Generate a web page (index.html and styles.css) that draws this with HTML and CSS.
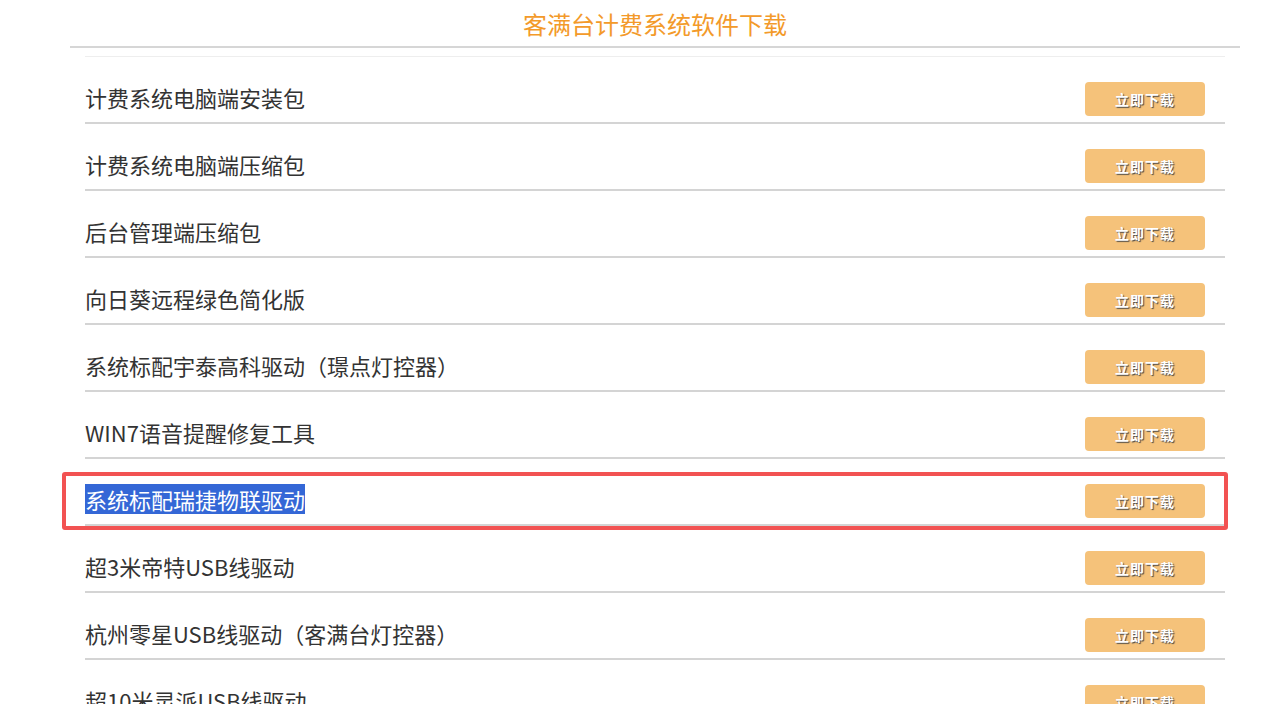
FILE: index.html
```html
<!DOCTYPE html>
<html lang="zh-CN">
<head>
<meta charset="utf-8">
<title>客满台计费系统软件下载</title>
<link rel="stylesheet" href="styles.css">
</head>
<body>
<div class="page">
  <h1 class="title">客满台计费系统软件下载</h1>
  <ul class="list">
    <li class="row"><span class="name">计费系统电脑端安装包</span><a class="btn">立即下载</a></li>
    <li class="row"><span class="name">计费系统电脑端压缩包</span><a class="btn">立即下载</a></li>
    <li class="row"><span class="name">后台管理端压缩包</span><a class="btn">立即下载</a></li>
    <li class="row"><span class="name">向日葵远程绿色简化版</span><a class="btn">立即下载</a></li>
    <li class="row"><span class="name">系统标配宇泰高科驱动（璟点灯控器）</span><a class="btn">立即下载</a></li>
    <li class="row"><span class="name">WIN7语音提醒修复工具</span><a class="btn">立即下载</a></li>
    <li class="row"><span class="name selected">系统标配瑞捷物联驱动</span><a class="btn">立即下载</a></li>
    <li class="row"><span class="name">超3米帝特USB线驱动</span><a class="btn">立即下载</a></li>
    <li class="row"><span class="name">杭州零星USB线驱动（客满台灯控器）</span><a class="btn">立即下载</a></li>
    <li class="row"><span class="name">超10米灵派USB线驱动</span><a class="btn">立即下载</a></li>
  </ul>
</div>
<div class="mark"></div>
</body>
</html>
```

FILE: styles.css
```css
html, body {
  margin: 0;
  padding: 0;
  background: #fff;
  overflow: hidden;
  height: 704px;
}
body {
  font-family: "Noto Sans CJK SC", "Noto Sans", sans-serif;
  color: #333;
}
.page {
  width: 1170px;
  margin-left: 70px;
}
.title {
  margin: 0;
  height: 46px;
  line-height: 48px;
  font-size: 24px;
  font-weight: normal;
  text-align: center;
  color: #f39a2a;
  border-bottom: 2px solid #d6d6d6;
}
.list {
  list-style: none;
  margin: 8px 15px 0 15px;
  padding: 0;
  border-top: 1px solid #eeeeee;
}
.row {
  display: flex;
  align-items: center;
  justify-content: space-between;
  height: 34px;
  padding: 25px 20px 6px 0;
  border-bottom: 2px solid #d4d4d4;
}
.name {
  font-size: 22px;
  line-height: 30px;
  margin-bottom: 5px;
  color: #333;
}
.selected {
  background: #3467d6;
  color: #fff;
}
.btn {
  display: flex;
  align-items: center;
  justify-content: center;
  width: 120px;
  height: 34px;
  border-radius: 4px;
  background: #f5c27a;
  color: #fff;
  font-size: 14px;
  font-weight: bold;
  letter-spacing: 1px;
  text-shadow: 1px 1px 1px #444;
}
.mark {
  position: absolute;
  left: 62px;
  top: 472px;
  width: 1166px;
  height: 58px;
  box-sizing: border-box;
  border: 4px solid #f25252;
  border-radius: 3px;
}
```
